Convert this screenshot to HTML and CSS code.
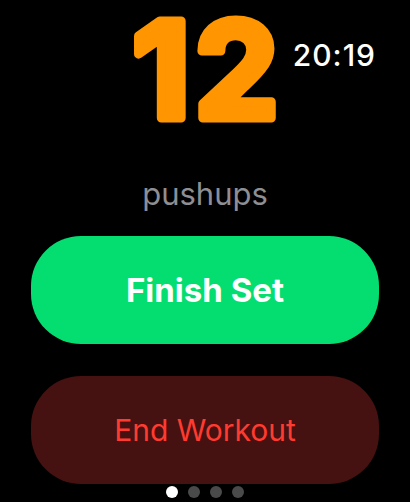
FILE: index.html
```html
<!DOCTYPE html>
<html lang="en">

<head>
    <meta charset="UTF-8">
    <meta name="viewport" content="width=device-width, initial-scale=1.0">
    <title>Workout</title>
    <link rel="stylesheet" href="styles.css">
</head>

<body>
    <div class="screen">
        <div class="top">
            <div></div>
            <svg class="reps" width="170" height="140" viewBox="0 0 170 140">
                <text x="88" y="118" text-anchor="middle">12</text>
            </svg>
            <div class="clock">20:19</div>
        </div>
        <div class="exercise">pushups</div>
        <button class="pill finish">Finish Set</button>
        <button class="pill end">End Workout</button>
        <div class="dots">
            <span class="dot active"></span>
            <span class="dot"></span>
            <span class="dot"></span>
            <span class="dot"></span>
        </div>
    </div>
</body>

</html>
```

FILE: styles.css
```css
body {
    margin: 0;
    background: #000;
    font-family: Inter, "Noto Sans", sans-serif;
    overflow: hidden;
}

.screen {
    display: flex;
    flex-direction: column;
    align-items: center;
    width: 410px;
    height: 502px;
}

.top {
    display: grid;
    grid-template-columns: 1fr auto 1fr;
    width: 100%;
    height: 160px;
}

.reps {
    margin-bottom: -20px;
}

.reps text {
    font-family: Inter, sans-serif;
    font-size: 133px;
    font-weight: 700;
    letter-spacing: 5px;
    fill: #ff9500;
    stroke: #ff9500;
    stroke-width: 9px;
    stroke-linejoin: round;
}

.clock {
    justify-self: end;
    padding-right: 34px;
    padding-top: 38px;
    font-size: 30px;
    font-weight: 500;
    letter-spacing: 1px;
    color: #fff;
    line-height: 34px;
}

.exercise {
    height: 76px;
    line-height: 68px;
    font-size: 31px;
    color: #8e8e93;
}

.pill {
    width: 348px;
    height: 108px;
    border: none;
    border-radius: 50px;
    font-family: inherit;
    padding: 0;
}

.finish {
    background: #04de71;
    color: #fff;
    font-size: 33px;
    font-weight: 700;
    margin-bottom: 32px;
}

.end {
    background: #461111;
    color: #ff3b30;
    font-size: 30px;
    font-weight: 400;
}

.dots {
    display: flex;
    gap: 10px;
    margin-top: 2px;
}

.dot {
    width: 12px;
    height: 12px;
    border-radius: 50%;
    background: #4a4a4a;
}

.dot.active {
    background: #fff;
}
```
